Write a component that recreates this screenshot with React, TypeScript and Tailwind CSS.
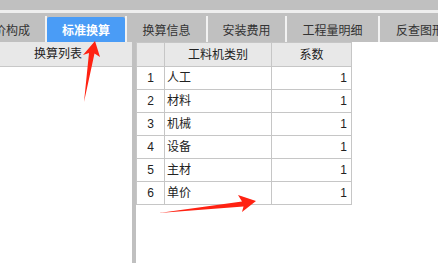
import React from "react";

const tabs = [
  { label: "造价构成", width: "w-[45px]", clip: true },
  { label: "标准换算", width: "w-[78px]", active: true },
  { label: "换算信息", width: "w-[79px]" },
  { label: "安装费用", width: "w-[77px]" },
  { label: "工程量明细", width: "w-[91px]" },
  { label: "反查图形", width: "w-[80px]" },
];

const rows = ["人工", "材料", "机械", "设备", "主材", "单价"];

export default function App() {
  return (
    <div
      className="relative w-[438px] h-[263px] overflow-hidden bg-white text-[12px] text-[#222]"
      style={{ fontFamily: '"Liberation Sans", "Noto Sans CJK SC", sans-serif' }}
    >
      {/* top strip */}
      <div className="h-[10px] bg-[#c0c0c0]" />
      <div className="h-[3px] bg-[#eeeeee]" />
      <div className="h-[29px] bg-[#c0c0c0] flex items-end gap-[2px]">
        {tabs.map((t) => (
          <div
            key={t.label}
            className={`${t.width} h-[25px] pt-[2px] shrink-0 flex items-center overflow-hidden whitespace-nowrap ${
              t.clip ? "justify-end pr-[15px]" : "justify-center"
            } ${
              t.active
                ? "bg-[#4a9cf6] text-white font-bold rounded-t-[2px]"
                : "bg-[#c0c0c0] text-[#333]"
            }`}
          >
            {t.label}
          </div>
        ))}
      </div>
      {/* separators between tabs */}
      <div className="absolute top-[16px] left-0 h-[26px] flex pointer-events-none">
        <div className="w-[45px]" />
        <div className="w-[2px] bg-[#f2f2f2]" />
        <div className="w-[78px]" />
        <div className="w-[2px] bg-[#f2f2f2]" />
        <div className="w-[79px]" />
        <div className="w-[2px] bg-[#f2f2f2]" />
        <div className="w-[77px]" />
        <div className="w-[2px] bg-[#f2f2f2]" />
        <div className="w-[91px]" />
        <div className="w-[2px] bg-[#f2f2f2]" />
      </div>

      {/* body */}
      <div className="flex h-[221px]">
        {/* left panel */}
        <div className="w-[132px] flex flex-col bg-white">
          <div className="h-[25px] bg-[#e8e8e8] border-b border-[#c8c8c8] flex items-center justify-center pr-[16px] text-[12px]">
            换算列表
          </div>
        </div>
        {/* splitter */}
        <div className="w-[4px] bg-[#c0c0c0]" />
        {/* right panel */}
        <div className="flex-1 bg-white">
          <table className="border-collapse table-fixed">
            <colgroup>
              <col className="w-[28px]" />
              <col className="w-[107px]" />
              <col className="w-[80px]" />
            </colgroup>
            <thead>
              <tr className="h-[24px] bg-[#e8e8e8]">
                <th className="border border-[#c6c6c6] font-normal" />
                <th className="border border-[#c6c6c6] font-normal text-center">工料机类别</th>
                <th className="border border-[#c6c6c6] font-normal text-center">系数</th>
              </tr>
            </thead>
            <tbody>
              {rows.map((r, i) => (
                <tr key={r} className="h-[23px]">
                  <td className="border border-[#c6c6c6] text-center p-0">{i + 1}</td>
                  <td className="border border-[#c6c6c6] text-left pl-[2px] p-0">{r}</td>
                  <td className="border border-[#c6c6c6] text-right pr-[4px] p-0">1</td>
                </tr>
              ))}
            </tbody>
          </table>
        </div>
      </div>

      {/* red arrows */}
      <svg className="absolute left-0 top-0 pointer-events-none" width="438" height="263">
        <polygon
          points="95,41 100,57 94.5,53.5 84,102 89,53 83,55"
          fill="#ff2212"
        />
        <polygon
          points="256,201 238,195 242,201.5 159,213 243.5,206.5 242,212"
          fill="#ff2212"
        />
      </svg>
    </div>
  );
}
